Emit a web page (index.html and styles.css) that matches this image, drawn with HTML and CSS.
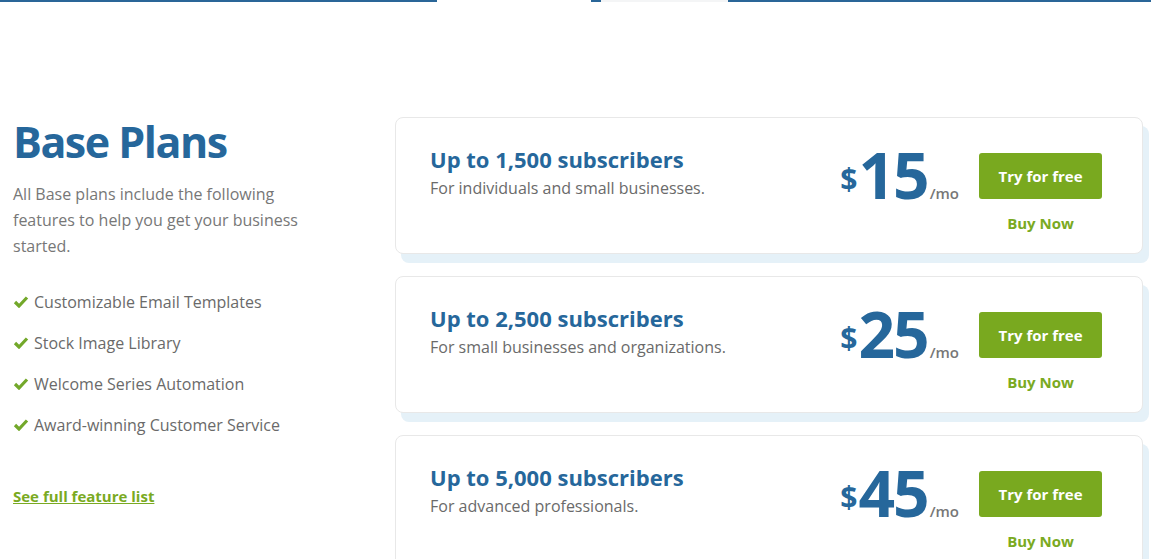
FILE: index.html
```html
<!DOCTYPE html>
<html lang="en">
<head>
    <meta charset="UTF-8">
    <meta name="viewport" content="width=device-width, initial-scale=1.0">
    <title>Base Plans</title>
    <link rel="stylesheet" href="styles.css">
</head>
<body>
    <!-- Tab strip -->
    <div class="tab-strip">
        <span class="seg seg-blue seg-first"></span>
        <span class="seg seg-gap"></span>
        <span class="seg seg-blue seg-small"></span>
        <span class="seg seg-active"></span>
        <span class="seg seg-blue seg-last"></span>
    </div>

    <section class="pricing">
        <!-- Intro column -->
        <div class="intro">
            <h1>Base Plans</h1>
            <p class="intro-text">All Base plans include the following features to help you get your business started.</p>
            <ul class="features">
                <li><svg class="check" viewBox="0 0 16 13"><path d="M2 7 L6 11 L14 2.5"/></svg>Customizable Email Templates</li>
                <li><svg class="check" viewBox="0 0 16 13"><path d="M2 7 L6 11 L14 2.5"/></svg>Stock Image Library</li>
                <li><svg class="check" viewBox="0 0 16 13"><path d="M2 7 L6 11 L14 2.5"/></svg>Welcome Series Automation</li>
                <li><svg class="check" viewBox="0 0 16 13"><path d="M2 7 L6 11 L14 2.5"/></svg>Award-winning Customer Service</li>
            </ul>
            <a href="#" class="feature-link">See full feature list</a>
        </div>

        <!-- Plan cards -->
        <div class="plans">
            <div class="plan">
                <div class="plan-info">
                    <h2>Up to 1,500 subscribers</h2>
                    <p>For individuals and small businesses.</p>
                </div>
                <div class="price"><span class="currency">$</span><span class="amount">15</span><span class="period">/mo</span></div>
                <div class="actions">
                    <a href="#" class="btn-try">Try for free</a>
                    <a href="#" class="btn-buy">Buy Now</a>
                </div>
            </div>
            <div class="plan">
                <div class="plan-info">
                    <h2>Up to 2,500 subscribers</h2>
                    <p>For small businesses and organizations.</p>
                </div>
                <div class="price"><span class="currency">$</span><span class="amount">25</span><span class="period">/mo</span></div>
                <div class="actions">
                    <a href="#" class="btn-try">Try for free</a>
                    <a href="#" class="btn-buy">Buy Now</a>
                </div>
            </div>
            <div class="plan">
                <div class="plan-info">
                    <h2>Up to 5,000 subscribers</h2>
                    <p>For advanced professionals.</p>
                </div>
                <div class="price"><span class="currency">$</span><span class="amount">45</span><span class="period">/mo</span></div>
                <div class="actions">
                    <a href="#" class="btn-try">Try for free</a>
                    <a href="#" class="btn-buy">Buy Now</a>
                </div>
            </div>
        </div>
    </section>
</body>
</html>
```

FILE: styles.css
```css
body {
    margin: 0;
    padding: 0;
    background-color: #fff;
    color: #6f6f6f;
    font-family: "Open Sans", "Liberation Sans", sans-serif;
    overflow: hidden;
}
.tab-strip {
    display: flex;
    height: 2px;
}
.seg {
    display: block;
    height: 2px;
}
.seg-blue {
    background-color: #2a6698;
}
.seg-first {
    width: 437px;
}
.seg-gap {
    width: 154px;
    background-color: #fff;
}
.seg-small {
    width: 10px;
}
.seg-active {
    width: 127px;
    background-color: #f4f5f6;
}
.seg-last {
    flex: 1;
}
.pricing {
    display: flex;
    padding: 114px 8px 0 13px;
}
.intro {
    width: 382px;
    flex-shrink: 0;
}
.intro h1 {
    margin: 0;
    font-size: 43px;
    font-weight: 700;
    color: #26679b;
    line-height: 52px;
    letter-spacing: -1.5px;
}
.intro-text {
    width: 300px;
    margin: 13px 0 0;
    font-size: 16px;
    line-height: 26px;
    color: #777;
}
.features {
    list-style-type: none;
    margin: 22px 0 0;
    padding: 0;
}
.features li {
    display: flex;
    align-items: center;
    height: 41px;
    font-size: 16px;
    color: #6a6a6a;
}
.check {
    width: 16px;
    height: 13px;
    margin-right: 5px;
}
.check path {
    fill: none;
    stroke: #73a82a;
    stroke-width: 3.2;
}
.feature-link {
    display: inline-block;
    margin-top: 41px;
    font-size: 15px;
    font-weight: 700;
    color: #7aaa22;
    text-decoration: underline;
}
.plans {
    flex: 1;
    display: flex;
    flex-direction: column;
    gap: 22px;
    padding-top: 1px;
}
.plan {
    display: flex;
    align-items: flex-start;
    height: 137px;
    box-sizing: border-box;
    padding: 26px 40px 0 34px;
    border: 1px solid #e8e8e8;
    border-radius: 8px;
    background-color: #fff;
    box-shadow: 6px 9px 0 #e5f1f8;
}
.plan-info {
    flex: 1;
}
.plan-info h2 {
    margin: 0;
    font-size: 22px;
    font-weight: 700;
    color: #26679b;
    line-height: 30px;
}
.plan-info p {
    margin: 3px 0 0;
    font-size: 16px;
    color: #6a6a6a;
}
.price {
    display: flex;
    align-items: baseline;
    margin-top: -5px;
    color: #26679b;
    font-weight: 700;
}
.currency {
    font-size: 30px;
    position: relative;
    top: -9px;
    margin-right: 1px;
}
.amount {
    font-size: 64px;
    line-height: 72px;
    letter-spacing: -2px;
}
.period {
    margin-left: 2px;
    font-size: 15px;
    font-weight: 600;
    color: #777;
}
.actions {
    display: flex;
    flex-direction: column;
    align-items: center;
    margin-left: 20px;
    margin-top: 9px;
}
.btn-try {
    display: block;
    width: 123px;
    height: 46px;
    line-height: 46px;
    text-align: center;
    background-color: #79a91f;
    color: #fff;
    font-size: 15px;
    font-weight: 700;
    text-decoration: none;
    border-radius: 3px;
}
.btn-buy {
    margin-top: 14px;
    font-size: 15px;
    font-weight: 700;
    color: #7aaa22;
    text-decoration: none;
}
```
